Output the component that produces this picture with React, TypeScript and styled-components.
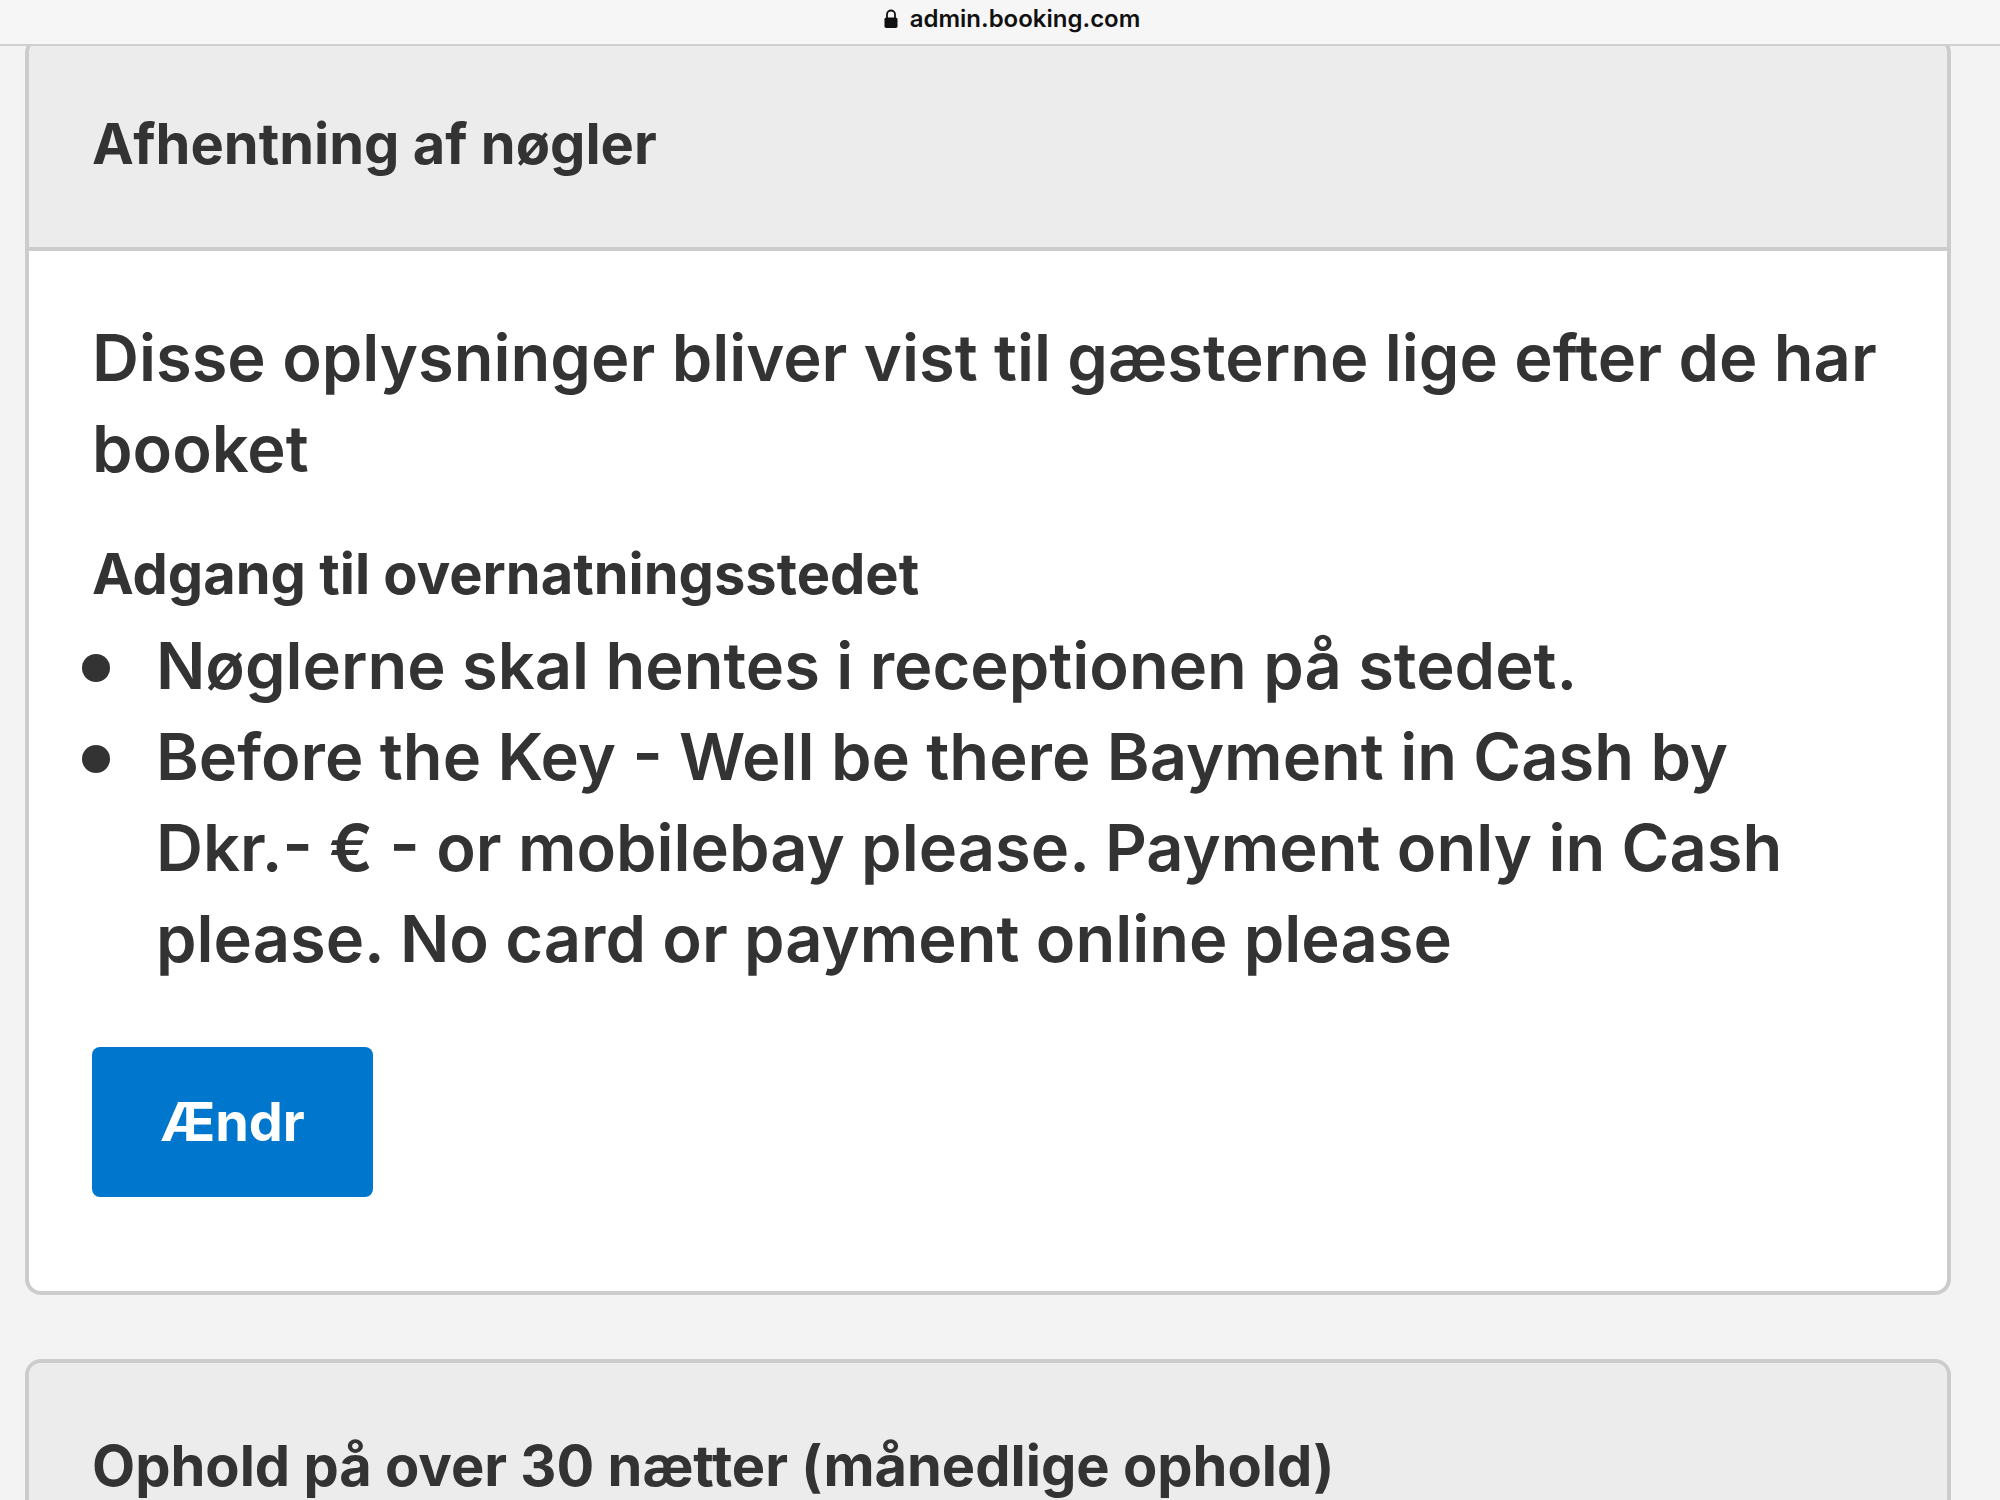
import React from 'react';
import styled, { createGlobalStyle } from 'styled-components';

const Global = createGlobalStyle`
  *, *::before, *::after { box-sizing: border-box; }
  body {
    margin: 0;
    background: #f3f3f3;
    color: #333;
    font-family: Inter, "Liberation Sans", sans-serif;
    font-size: 65px;
    line-height: 91px;
    overflow: hidden;
  }
`;

const AddressBar = styled.header`
  position: relative;
  z-index: 1;
  display: flex;
  align-items: center;
  justify-content: center;
  gap: 12px;
  height: 46px;
  padding: 0 0 6px 24px;
  background: #f6f6f6;
  border-bottom: 2px solid #d0d0d0;
  color: #111;
  font-size: 24px;
  font-weight: 600;
  line-height: 32px;
`;

const Content = styled.main`
  display: flex;
  flex-direction: column;
  gap: 64px;
  height: calc(100vh - 46px);
  overflow: hidden;
  padding: 0 49px 0 25px;
`;

const Card = styled.section<{ $scrolled?: boolean }>`
  flex: none;
  overflow: hidden;
  background: #fff;
  border: 4px solid #ccc;
  border-radius: 16px;
  margin-top: ${(p) => (p.$scrolled ? '-9px' : '0')};
`;

const CardHeader = styled.header`
  padding: 63px;
  background: #ececec;
  border-bottom: 4px solid #ccc;
`;

const Title = styled.h2`
  margin: 0;
  font-size: 56px;
  font-weight: 700;
  line-height: 80px;
`;

const CardBody = styled.div`
  padding: 61px 63px 94px;
`;

const Lead = styled.p`
  margin: 0 0 40px;
  font-weight: 600;
`;

const Subtitle = styled.h3`
  margin: 0 0 6px;
  font-size: 56px;
  font-weight: 700;
  line-height: 80px;
`;

const List = styled.ul`
  margin: 0 0 63px -10px;
  padding: 0;
  list-style: none;
  font-weight: 600;
`;

const Item = styled.li`
  display: flex;
  gap: 46px;

  &::before {
    content: '';
    flex: none;
    width: 28px;
    height: 28px;
    margin-top: 34px;
    border-radius: 50%;
    background: currentColor;
  }
`;

const Button = styled.button`
  display: block;
  padding: 35px 68px;
  border: 0;
  border-radius: 8px;
  background: #0077cc;
  color: #fff;
  font-family: inherit;
  font-size: 54px;
  font-weight: 700;
  line-height: 80px;
`;

export default function App() {
  return (
    <>
      <Global />
      <AddressBar>
        <svg width="14" height="20" viewBox="0 0 14 20" aria-hidden="true">
          <path d="M3 9V5.5a4 4 0 0 1 8 0V9" fill="none" stroke="#111" strokeWidth="1.8" />
          <rect x="0.5" y="8.5" width="13" height="10.5" rx="1.8" fill="#111" />
        </svg>
        <span>admin.booking.com</span>
      </AddressBar>
      <Content>
        <Card $scrolled>
          <CardHeader><Title>Afhentning af nøgler</Title></CardHeader>
          <CardBody>
            <Lead>Disse oplysninger bliver vist til gæsterne lige efter de har booket</Lead>
            <Subtitle>Adgang til overnatningsstedet</Subtitle>
            <List>
              <Item><span>Nøglerne skal hentes i receptionen på stedet.</span></Item>
              <Item>
                <span>
                  Before the Key - Well be there Bayment in Cash by Dkr.- € - or mobilebay please.
                  Payment only in Cash please. No card or payment online please
                </span>
              </Item>
            </List>
            <Button type="button">Ændr</Button>
          </CardBody>
        </Card>
        <Card>
          <CardHeader><Title>Ophold på over 30 nætter (månedlige ophold)</Title></CardHeader>
        </Card>
      </Content>
    </>
  );
}
